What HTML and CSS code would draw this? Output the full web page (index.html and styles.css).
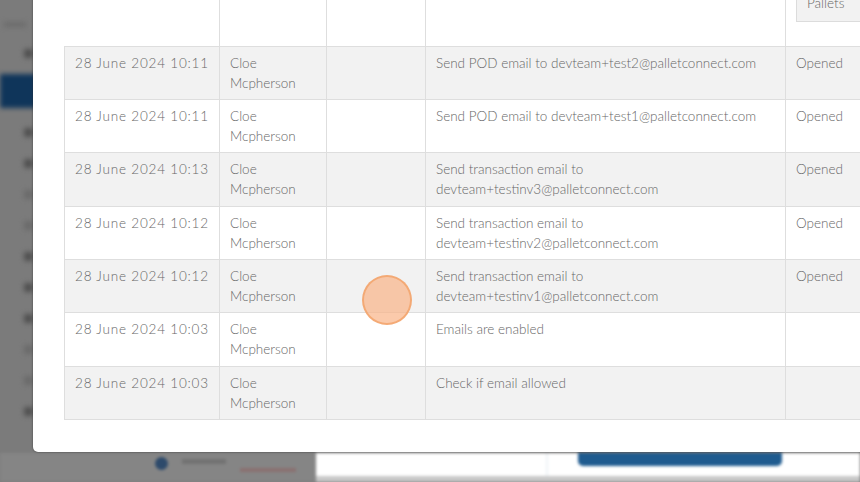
FILE: index.html
```html
<!DOCTYPE html>
<html>
<head>
<meta charset="utf-8">
<link rel="stylesheet" href="styles.css">
</head>
<body>
<div class="backdrop">
  <div class="bg-top">
    <div class="bg-sidebar">
      <span class="sb-line"></span>
      <span class="sb-icon"></span>
      <span class="sb-active"></span>
      <span class="sb-icon"></span>
      <span class="sb-icon"></span>
      <span class="sb-icon light"></span>
      <span class="sb-icon light"></span>
      <span class="sb-icon"></span>
      <span class="sb-icon"></span>
      <span class="sb-icon"></span>
      <span class="sb-icon light"></span>
      <span class="sb-icon light"></span>
      <span class="sb-icon"></span>
    </div>
  </div>
  <div class="bg-bottom">
    <div class="bg-left">
      <span class="dot"></span>
      <span class="blur-text"></span>
      <span class="blur-red"></span>
    </div>
    <div class="bg-right">
      <div class="bg-card"><span class="blur-text pale"></span></div>
      <div class="bg-card2"><span class="bg-btn"></span></div>
    </div>
  </div>
</div>

<div class="modal">
  <table class="log">
    <colgroup>
      <col class="c-date"><col class="c-user"><col class="c-ref"><col class="c-desc"><col class="c-status">
    </colgroup>
    <thead>
      <tr>
        <th></th><th></th><th></th><th></th>
        <th><div class="pallets">Pallets</div></th>
      </tr>
    </thead>
    <tbody>
      <tr><td class="date">28 June 2024 10:11</td><td>Cloe<br>Mcpherson</td><td></td><td>Send POD email to devteam+test2@palletconnect.com</td><td>Opened</td></tr>
      <tr><td class="date">28 June 2024 10:11</td><td>Cloe<br>Mcpherson</td><td></td><td>Send POD email to devteam+test1@palletconnect.com</td><td>Opened</td></tr>
      <tr><td class="date">28 June 2024 10:13</td><td>Cloe<br>Mcpherson</td><td></td><td>Send transaction email to<br>devteam+testinv3@palletconnect.com</td><td>Opened</td></tr>
      <tr><td class="date">28 June 2024 10:12</td><td>Cloe<br>Mcpherson</td><td></td><td>Send transaction email to<br>devteam+testinv2@palletconnect.com</td><td>Opened</td></tr>
      <tr><td class="date">28 June 2024 10:12</td><td>Cloe<br>Mcpherson</td><td></td><td>Send transaction email to<br>devteam+testinv1@palletconnect.com</td><td>Opened</td></tr>
      <tr><td class="date">28 June 2024 10:03</td><td>Cloe<br>Mcpherson</td><td></td><td>Emails are enabled</td><td></td></tr>
      <tr><td class="date">28 June 2024 10:03</td><td>Cloe<br>Mcpherson</td><td></td><td>Check if email allowed</td><td></td></tr>
    </tbody>
  </table>
</div>

<div class="click-marker"></div>
</body>
</html>
```

FILE: styles.css
```css
html, body {
  margin: 0;
  padding: 0;
  width: 860px;
  height: 482px;
  overflow: hidden;
  font-family: Lato, "Liberation Sans", sans-serif;
}

.backdrop {
  width: 860px;
  height: 482px;
  display: grid;
  grid-template-rows: 453px 29px;
  background: #7c7c7c;
}

.bg-top {
  display: flex;
  background: #7b7b7b;
}

.bg-sidebar {
  width: 36px;
  display: flex;
  flex-direction: column;
  align-items: flex-end;
  padding-top: 22px;
  filter: blur(2.5px);
}

.sb-line {
  width: 22px;
  height: 5px;
  background: #6c6c6c;
  margin-right: 10px;
  margin-bottom: 22px;
}

.sb-icon {
  width: 9px;
  height: 9px;
  border-radius: 3px;
  background: #4e4e4e;
  margin-right: 3px;
  margin-bottom: 22px;
}

.sb-icon.light {
  background: #6a6a6a;
}

.sb-active {
  align-self: stretch;
  height: 34px;
  background: #0f355a;
  margin: -6px 0 20px 0;
}

.bg-bottom {
  display: flex;
  filter: blur(1.5px);
}

.bg-left {
  width: 316px;
  background: #858585;
  display: flex;
  align-items: flex-start;
  padding-left: 155px;
  box-sizing: border-box;
  gap: 14px;
}

.dot {
  width: 13px;
  height: 13px;
  border-radius: 50%;
  background: #2d4a6b;
  margin-top: 4px;
}

.blur-text {
  width: 44px;
  height: 5px;
  background: #727272;
  margin-top: 6px;
}

.blur-text.pale {
  background: #ececec;
  margin: 8px 0 0 18px;
  width: 55px;
}

.blur-red {
  width: 56px;
  height: 4px;
  background: #8a7070;
  margin-top: 15px;
}

.bg-right {
  flex: 1;
  display: flex;
  background: #fff;
  border-bottom: 6px solid #c8c8c8;
}

.bg-card {
  width: 230px;
  border-right: 2px solid #eef2f7;
}

.bg-card2 {
  flex: 1;
  padding-left: 30px;
}

.bg-btn {
  display: block;
  width: 204px;
  height: 13px;
  background: #1f5b8f;
  border-radius: 0 0 5px 5px;
}

.modal {
  position: absolute;
  left: 33px;
  top: -10px;
  width: 860px;
  height: 462px;
  background: #fff;
  border-radius: 0 0 0 5px;
  box-shadow: 0 0 2px rgba(0, 0, 0, 0.55);
  padding: 10px 0 0 31px;
  box-sizing: border-box;
}

.log {
  border-collapse: collapse;
  table-layout: fixed;
  width: 880px;
  font-size: 13.5px;
  font-weight: 300;
  line-height: 20px;
  color: #676767;
}

.c-date { width: 155px; }
.c-user { width: 107px; }
.c-ref { width: 99px; }
.c-desc { width: 360px; }
.c-status { width: 159px; }

.log th {
  height: 46px;
  padding: 0 10px;
  box-sizing: border-box;
  border-right: 1px solid #dedede;
  border-bottom: 1px solid #dedede;
  vertical-align: top;
  text-align: left;
  font-weight: 300;
}

.pallets {
  margin-top: -17px;
  width: 110px;
  padding: 9px 10px 8px;
  background: #f2f2f2;
  border: 1px solid #dcdcdc;
  color: #676767;
}

.log td {
  padding: 6px 10px 6.4px;
  border: 1px solid #dedede;
  vertical-align: top;
  height: 40px;
}

.log td.date {
  letter-spacing: 0.8px;
}

.log tbody tr:nth-child(odd) td {
  background: #f2f2f2;
}

.click-marker {
  position: absolute;
  left: 362px;
  top: 275px;
  width: 50px;
  height: 50px;
  border-radius: 50%;
  background: rgba(250, 180, 135, 0.7);
  border: 2px solid rgba(242, 160, 100, 0.75);
  box-sizing: border-box;
}
```
